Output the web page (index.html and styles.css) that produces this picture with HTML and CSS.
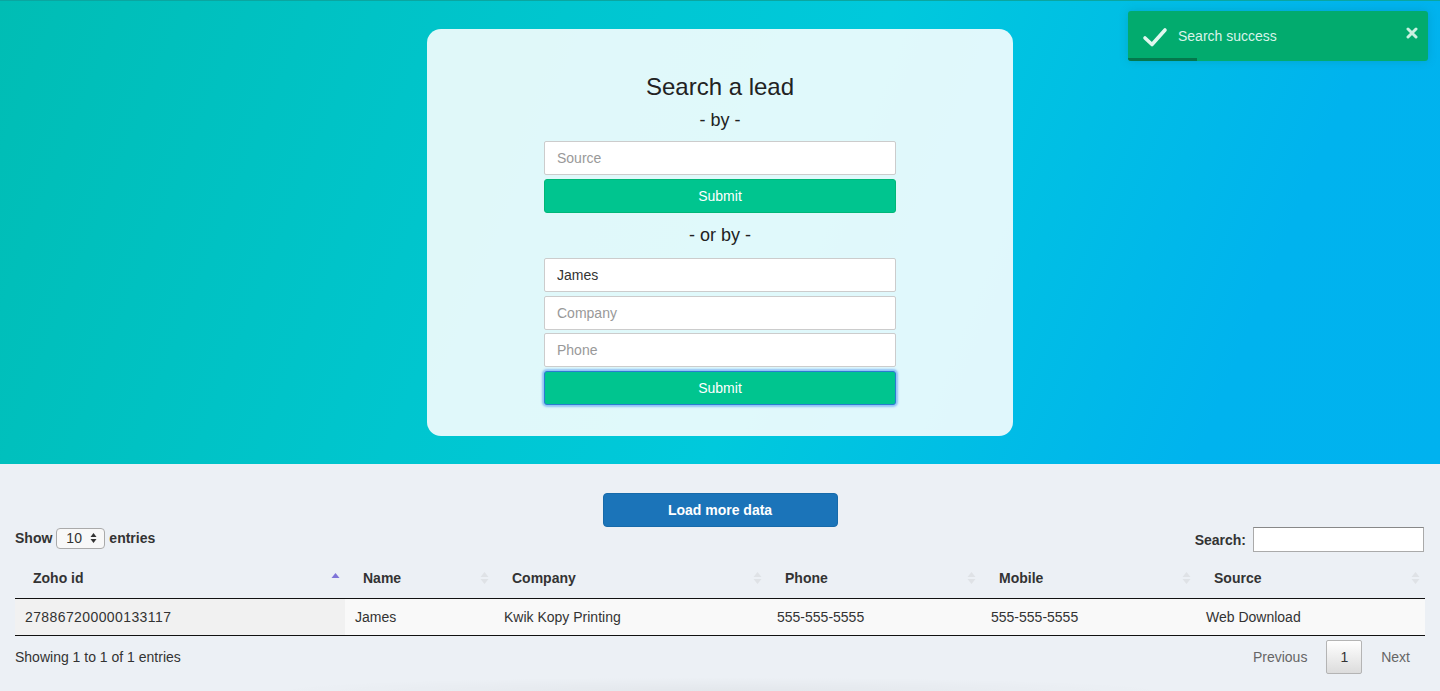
FILE: index.html
```html
<!DOCTYPE html>
<html>
<head>
<meta charset="utf-8">
<title>Search a lead</title>
<link rel="stylesheet" href="styles.css">
</head>
<body>
<header class="hero">
  <div class="card">
    <h1 class="title">Search a lead</h1>
    <p class="by">- by -</p>
    <div class="form">
      <input class="field" type="text" placeholder="Source">
      <button class="submit">Submit</button>
    </div>
    <p class="by or">- or by -</p>
    <div class="form">
      <input class="field" type="text" value="James">
      <input class="field" type="text" placeholder="Company">
      <input class="field" type="text" placeholder="Phone">
      <button class="submit focused">Submit</button>
    </div>
  </div>
</header>

<div class="toast">
  <svg class="toast-check" width="26" height="22" viewBox="0 0 26 22"><path d="M3 12 L10 18.5 L23 4" fill="none" stroke="#dff7ee" stroke-width="3.6" stroke-linecap="round" stroke-linejoin="round"/></svg>
  <span class="toast-text">Search success</span>
  <svg class="toast-close" width="12" height="12" viewBox="0 0 12 12"><path d="M2 2 L10 10 M10 2 L2 10" stroke="#c9f0e0" stroke-width="3" stroke-linecap="round"/></svg>
  <div class="toast-progress"></div>
</div>

<main class="data">
  <div class="load-row"><button class="load">Load more data</button></div>
  <div class="controls">
    <label class="length">Show
      <span class="select"><span class="select-val">10</span>
        <svg width="7" height="12" viewBox="0 0 7 12"><path d="M0.5 5 L3.5 1 L6.5 5 Z M0.5 7 L3.5 11 L6.5 7 Z" fill="#333"/></svg>
      </span>
      entries</label>
    <label class="filter">Search: <input class="search" type="text"></label>
  </div>
  <table class="table">
    <colgroup>
      <col class="c1"><col class="c2"><col class="c3"><col class="c4"><col class="c5"><col class="c6">
    </colgroup>
    <thead>
      <tr>
        <th>Zoho id<svg class="sort" width="9" height="16" viewBox="0 0 9 16"><path d="M0.5 8 L4.5 3 L8.5 8 Z" fill="#7f74d8"/></svg></th>
        <th>Name<svg class="sort" width="9" height="16" viewBox="0 0 9 16"><path d="M0.5 7 L4.5 2 L8.5 7 Z M0.5 9 L4.5 14 L8.5 9 Z" fill="#dfe2e6"/></svg></th>
        <th>Company<svg class="sort" width="9" height="16" viewBox="0 0 9 16"><path d="M0.5 7 L4.5 2 L8.5 7 Z M0.5 9 L4.5 14 L8.5 9 Z" fill="#dfe2e6"/></svg></th>
        <th>Phone<svg class="sort" width="9" height="16" viewBox="0 0 9 16"><path d="M0.5 7 L4.5 2 L8.5 7 Z M0.5 9 L4.5 14 L8.5 9 Z" fill="#dfe2e6"/></svg></th>
        <th>Mobile<svg class="sort" width="9" height="16" viewBox="0 0 9 16"><path d="M0.5 7 L4.5 2 L8.5 7 Z M0.5 9 L4.5 14 L8.5 9 Z" fill="#dfe2e6"/></svg></th>
        <th>Source<svg class="sort" width="9" height="16" viewBox="0 0 9 16"><path d="M0.5 7 L4.5 2 L8.5 7 Z M0.5 9 L4.5 14 L8.5 9 Z" fill="#dfe2e6"/></svg></th>
      </tr>
    </thead>
    <tbody>
      <tr>
        <td class="sorted">278867200000133117</td>
        <td>James</td>
        <td>Kwik Kopy Printing</td>
        <td>555-555-5555</td>
        <td>555-555-5555</td>
        <td>Web Download</td>
      </tr>
    </tbody>
  </table>
  <div class="footer">
    <div class="info">Showing 1 to 1 of 1 entries</div>
    <div class="paginate">
      <span class="pg disabled">Previous</span>
      <span class="pg current">1</span>
      <span class="pg disabled">Next</span>
    </div>
  </div>
  <div class="shade"></div>
</main>
</body>
</html>
```

FILE: styles.css
```css
* { box-sizing: border-box; }
html, body { margin: 0; padding: 0; }
body {
  font-family: "Liberation Sans", Arial, Helvetica, sans-serif;
  font-size: 14px;
  line-height: 20px;
  color: #333;
  background: #ecf0f5;
  height: 691px;
  overflow: hidden;
}

.hero {
  height: 464px;
  padding-top: 28px;
  border-top: 1px solid #0aa6a0;
  background: linear-gradient(112deg, #00bdb4 0%, #00c6cf 35%, #00c9dc 55%, #00b3ee 85%, #00b2ef 100%);
}
.card {
  width: 586px;
  height: 407px;
  margin: 0 auto;
  padding-top: 44px;
  background: rgba(255, 255, 255, 0.88);
  border-radius: 14px;
  text-align: center;
}
.title {
  margin: 0;
  font-size: 24px;
  line-height: 28px;
  font-weight: normal;
  color: #222;
}
.by {
  margin: 8px 0 10px;
  font-size: 18px;
  line-height: 22px;
  color: #222;
}
.by.or { margin: 11px 0 12px; }
.form {
  width: 352px;
  margin: 0 auto;
  display: flex;
  flex-direction: column;
  gap: 4px;
}
.field {
  height: 34px;
  border: 1px solid #cccccc;
  border-radius: 2px;
  background: #fff;
  padding: 0 12px;
  font-family: inherit;
  font-size: 14px;
  color: #333;
  outline: none;
}
.field + .field + .field { margin-top: -1px; }
.field::placeholder { color: #999; }
.submit {
  height: 34px;
  border: 1px solid #00b777;
  border-radius: 3px;
  background: #00c58f;
  color: #fff;
  font-family: inherit;
  font-size: 14px;
  padding: 0;
}
.submit.focused {
  border-color: #2b7bd0;
  box-shadow: 0 0 2px 2px rgba(80, 150, 240, 0.55);
}

.toast {
  position: absolute;
  top: 11px;
  left: 1128px;
  width: 300px;
  height: 50px;
  background: #02ab6e;
  border-radius: 3px;
  box-shadow: 0 0 8px rgba(0, 110, 120, 0.25);
  display: flex;
  align-items: center;
  padding-left: 14px;
  overflow: hidden;
}
.toast-check { margin-right: 10px; margin-top: 1px; }
.toast-text {
  color: #d9f4e9;
  font-size: 14px;
  flex: 1;
}
.toast-close { margin-right: 10px; margin-top: -6px; }
.toast-progress {
  position: absolute;
  left: 0;
  bottom: 0;
  width: 69px;
  height: 3px;
  background: #04784c;
}

.data { padding: 29px 15px 0; }
.load-row { display: flex; justify-content: center; }
.load {
  width: 235px;
  height: 34px;
  background: #1b74b9;
  border: 1px solid #176aaa;
  border-radius: 4px;
  color: #fff;
  font-family: inherit;
  font-size: 14px;
  font-weight: bold;
}
.controls {
  display: flex;
  justify-content: space-between;
  align-items: flex-start;
  height: 25px;
}
.length {
  display: flex;
  align-items: center;
  gap: 4px;
  font-weight: bold;
  height: 22px;
}
.select {
  display: inline-flex;
  align-items: center;
  justify-content: space-between;
  width: 49px;
  height: 21px;
  border: 1px solid #aaa;
  border-radius: 4px;
  background: #f8f8f8;
  padding: 0 7px 0 9px;
  font-weight: normal;
}
.filter {
  display: flex;
  align-items: center;
  gap: 6px;
  font-weight: bold;
  margin-right: 1px;
  height: 25px;
}
.search {
  width: 171px;
  height: 25px;
  border: 1px solid #aaa;
  border-top-color: #888;
  background: #fff;
  margin-left: 1px;
  outline: none;
}

.table {
  width: 1410px;
  border-collapse: collapse;
  margin-top: 8px;
  table-layout: fixed;
}
.c1 { width: 330px; }
.c2 { width: 149px; }
.c3 { width: 273px; }
.c4 { width: 214px; }
.c5 { width: 215px; }
.c6 { width: 229px; }
.table th {
  text-align: left;
  font-weight: bold;
  padding: 8px 18px 10px 18px;
  border-bottom: 1px solid #111;
  position: relative;
  color: #333;
}
.sort {
  position: absolute;
  right: 5px;
  top: 10px;
}
.table td {
  padding: 8px 10px;
  background: #f9f9f9;
  border-bottom: 1px solid #111;
}
.table td.sorted { background: #f1f1f1; letter-spacing: 0.4px; }

.footer {
  display: flex;
  justify-content: space-between;
  align-items: center;
  margin-top: 4px;
}
.paginate { display: flex; align-items: center; }
.pg {
  padding: 7px 14px;
  margin-left: 2px;
  border: 1px solid transparent;
  border-radius: 2px;
  color: #666;
  line-height: 18px;
}
.pg.current {
  color: #333;
  border-color: #b4b4b4;
  background: linear-gradient(to bottom, #ffffff 0%, #dcdcdc 100%);
  padding: 7px 13px;
  margin: 0 2px 0 4px;
}
.shade {
  height: 14px;
  margin: 3px 245px 0 245px;
  background: radial-gradient(ellipse at center bottom, rgba(0, 0, 0, 0.04), rgba(0, 0, 0, 0) 70%);
}
```
